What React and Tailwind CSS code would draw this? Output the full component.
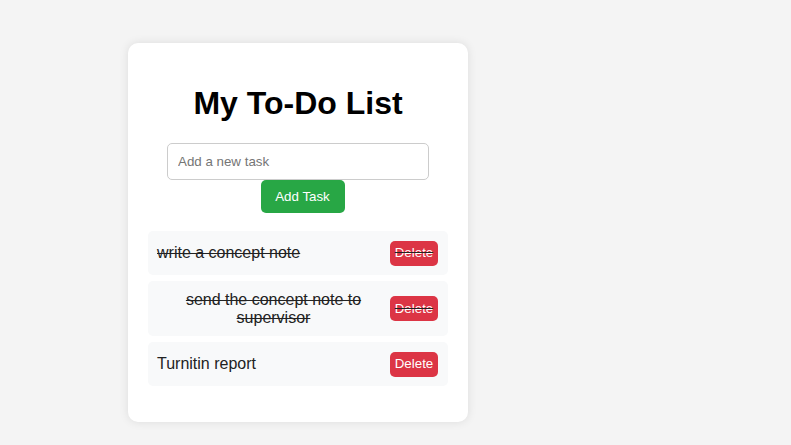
const tasks = [
  { text: 'write a concept note', done: true },
  { text: 'send the concept note to supervisor', done: true },
  { text: 'Turnitin report', done: false },
];

export default function App() {
  return (
    <div
      className="min-h-[445px] bg-[#f4f4f4] pt-[43px] pl-[128px]"
      style={{ fontFamily: '"Liberation Sans", Arial, sans-serif' }}
    >
      <div className="w-[340px] rounded-[10px] bg-white p-5 text-center shadow-[0_0_10px_rgba(0,0,0,0.1)]">
        <h1 className="mt-[22px] mb-[21px] text-[32px] font-bold leading-[37px] text-black">My To-Do List</h1>
        <div>
          <input
            type="text"
            placeholder="Add a new task"
            className="h-[37px] w-[262px] rounded-[5px] border border-[#ccc] px-[10px] text-[13.33px] text-[#333] placeholder:text-[#757575] outline-none"
          />
        </div>
        <button className="ml-[9px] h-[33px] w-[84px] rounded-[5px] bg-[#28a745] text-[13.33px] text-white">
          Add Task
        </button>
        <ul className="mt-[18px] mb-4 flex flex-col gap-[6px]">
          {tasks.map((t) => (
            <li
              key={t.text}
              className={`flex items-center justify-between rounded-[5px] bg-[#f8f9fa] pl-[9px] pr-[10px] py-[9.5px] text-[16px] leading-[18px] text-[#222] ${t.done ? 'line-through' : ''}`}
            >
              <span>{t.text}</span>
              <button className="h-[25px] w-[48px] shrink-0 rounded-[5px] bg-[#dc3545] text-[13.33px] text-white">
                Delete
              </button>
            </li>
          ))}
        </ul>
      </div>
    </div>
  );
}
